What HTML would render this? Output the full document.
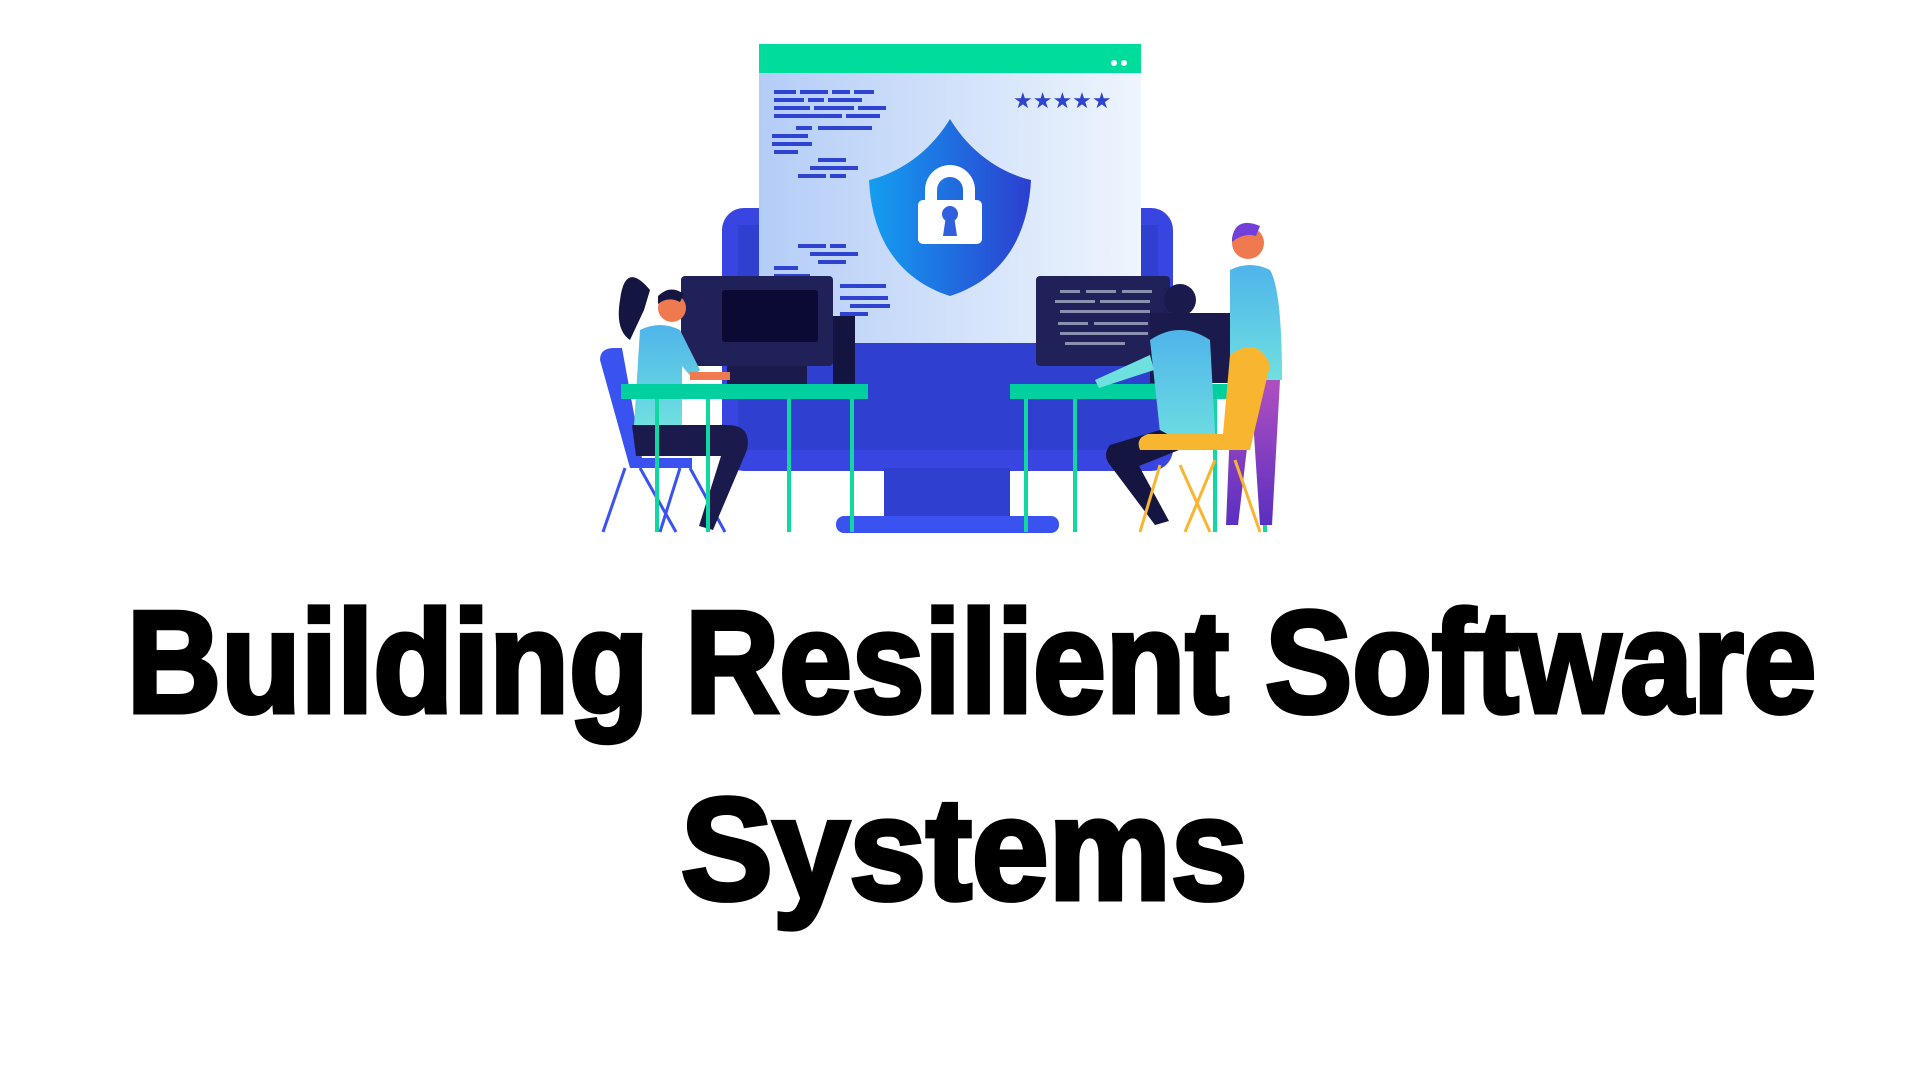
<!DOCTYPE html>
<html><head><meta charset="utf-8"><style>
html,body{margin:0;padding:0;background:#fff;width:1920px;height:1080px;overflow:hidden;position:relative}
.t{position:absolute;left:0;width:1920px;text-align:center;font-family:"Liberation Sans",sans-serif;font-weight:bold;font-size:145px;line-height:1;color:#000;-webkit-text-stroke:5px #000;white-space:nowrap}
.t span{display:inline-block;transform:scaleX(0.9);transform-origin:center}
svg{position:absolute;left:0;top:0}
</style></head><body>
<svg width="1920" height="1080" viewBox="0 0 1920 1080">
<defs>
<linearGradient id="pan" x1="0" x2="1" y1="0" y2="0"><stop offset="0" stop-color="#b4cdf7"/><stop offset="1" stop-color="#eef5fd"/></linearGradient>
<linearGradient id="sh" x1="0" x2="1"><stop offset="0" stop-color="#139ef0"/><stop offset="1" stop-color="#2c3fd0"/></linearGradient>
<linearGradient id="shirt" x1="0" x2="0" y1="0" y2="1"><stop offset="0" stop-color="#4fb4ea"/><stop offset="1" stop-color="#6fe0e0"/></linearGradient>
<linearGradient id="pants" x1="0" x2="0" y1="0" y2="1"><stop offset="0" stop-color="#b04fc0"/><stop offset="1" stop-color="#5a2fc0"/></linearGradient>
</defs>
<rect x="722" y="208" width="451" height="263" rx="22" fill="#3845e0"/>
<rect x="738" y="225" width="420" height="225" fill="#2f3fd0"/>
<rect x="884" y="468" width="126" height="52" fill="#2f3fd0"/>
<rect x="836" y="516" width="223" height="17" rx="8" fill="#3a52f0"/>
<rect x="759" y="73" width="382" height="270" fill="url(#pan)"/>
<rect x="759" y="44" width="382" height="29" fill="#00dc9c"/>
<circle cx="1114" cy="63" r="3" fill="#fff"/><circle cx="1124" cy="63" r="3" fill="#fff"/>
<g fill="#2e43d0">
<rect x="774" y="90" width="22" height="4"/><rect x="800" y="90" width="28" height="4"/><rect x="832" y="90" width="18" height="4"/><rect x="854" y="90" width="20" height="4"/>
<rect x="774" y="98" width="30" height="4"/><rect x="808" y="98" width="16" height="4"/><rect x="828" y="98" width="34" height="4"/>
<rect x="774" y="106" width="36" height="4"/><rect x="814" y="106" width="40" height="4"/><rect x="858" y="106" width="28" height="4"/>
<rect x="774" y="114" width="68" height="4"/><rect x="846" y="114" width="34" height="4"/>
<rect x="796" y="126" width="16" height="4"/><rect x="818" y="126" width="54" height="4"/>
<rect x="772" y="134" width="36" height="4"/><rect x="772" y="142" width="40" height="4"/><rect x="774" y="150" width="24" height="4"/>
<rect x="818" y="158" width="28" height="4"/><rect x="810" y="166" width="48" height="4"/><rect x="798" y="174" width="28" height="4"/><rect x="830" y="174" width="16" height="4"/>
<rect x="798" y="244" width="28" height="4"/><rect x="830" y="244" width="16" height="4"/><rect x="810" y="252" width="48" height="4"/><rect x="818" y="260" width="28" height="4"/>
<rect x="774" y="266" width="24" height="4"/><rect x="774" y="274" width="36" height="4"/>
<rect x="840" y="284" width="46" height="4"/><rect x="840" y="296" width="48" height="4"/><rect x="850" y="304" width="40" height="4"/><rect x="840" y="312" width="28" height="4"/>
</g>
<g fill="#2e43d0" font-family="DejaVu Sans" font-size="22"><text x="1013" y="108">★★★★★</text></g>
<path d="M950 119 C975 160 1010 175 1031 180 C1028 240 1000 280 950 296 C900 280 872 240 869 180 C890 175 925 160 950 119Z" fill="url(#sh)"/>
<path d="M925 200 v-10 a25 25 0 0 1 50 0 v10 h-12 v-10 a13 13 0 0 0 -26 0 v10z" fill="#fff"/>
<rect x="918" y="200" width="64" height="44" rx="5" fill="#fff"/>
<circle cx="950" cy="214" r="8" fill="#2e60e0"/><path d="M946 216 h8 l3 20 h-14z" fill="#2e60e0"/>
<rect x="681" y="276" width="152" height="90" rx="4" fill="#1f2158"/>
<rect x="722" y="290" width="96" height="52" rx="3" fill="#0a0a35"/>
<rect x="833" y="316" width="22" height="68" fill="#13143f"/>
<rect x="727" y="366" width="80" height="18" fill="#1a1b4c"/>
<rect x="1036" y="276" width="134" height="90" rx="4" fill="#1f2158"/>
<g fill="#8a90b0"><rect x="1060" y="290" width="20" height="3"/><rect x="1086" y="290" width="30" height="3"/><rect x="1122" y="290" width="30" height="3"/><rect x="1055" y="300" width="40" height="3"/><rect x="1100" y="300" width="50" height="3"/><rect x="1060" y="310" width="90" height="3"/><rect x="1058" y="322" width="30" height="3"/><rect x="1094" y="322" width="54" height="3"/><rect x="1060" y="332" width="88" height="3"/><rect x="1065" y="342" width="60" height="3"/></g>
<rect x="1150" y="313" width="110" height="70" fill="#1a1b4c"/>
<path d="M600 360 q0 -12 14 -12 l8 0 l20 110 l50 0 l0 10 l-62 0z" fill="#3a52f0"/>
<g stroke="#3a52f0" stroke-width="3"><line x1="625" y1="468" x2="603" y2="532"/><line x1="640" y1="468" x2="676" y2="532"/><line x1="680" y1="468" x2="660" y2="532"/><line x1="690" y1="468" x2="725" y2="532"/></g>
<path d="M650 290 q-25 -30 -30 10 q-5 30 10 40 l14 -30z" fill="#141540"/>
<circle cx="672" cy="308" r="14" fill="#f07a50"/>
<path d="M658 296 q12 -12 26 -2 l-4 8 q-12 -6 -22 2z" fill="#141540"/>
<path d="M640 330 q20 -10 40 0 l20 40 l-8 8 l-10 -12 v60 h-48 z" fill="url(#shirt)"/>
<path d="M632 425 h95 q25 0 20 25 l-34 80 l-14 -4 l22 -70 h-85 z" fill="#1a1b4c"/>
<rect x="690" y="372" width="40" height="8" fill="#f07a50"/>
<rect x="621" y="384" width="247" height="15" fill="#00d0a0"/>
<g stroke="#10d8a0" stroke-width="4"><line x1="657" y1="399" x2="657" y2="532"/><line x1="708" y1="399" x2="708" y2="532"/><line x1="789" y1="399" x2="789" y2="532"/><line x1="852" y1="399" x2="852" y2="532"/>
<line x1="1026" y1="399" x2="1026" y2="532"/><line x1="1075" y1="399" x2="1075" y2="532"/><line x1="1215" y1="399" x2="1215" y2="532"/><line x1="1265" y1="399" x2="1265" y2="532"/></g>
<rect x="1010" y="384" width="263" height="15" fill="#00d0a0"/>
<circle cx="1248" cy="243" r="16" fill="#f07a50"/>
<path d="M1232 238 q4 -22 28 -12 l-4 10 q-12 -4 -24 6z" fill="#7040d8"/>
<path d="M1230 270 q20 -10 40 0 q12 20 12 110 h-52 z" fill="url(#shirt)"/>
<path d="M1232 380 h48 l-8 145 h-12 l-8 -120 l-14 120 h-12z" fill="url(#pants)"/>
<circle cx="1180" cy="300" r="16" fill="#1a1b4c"/>
<path d="M1150 340 q30 -20 60 0 l6 110 h-54 z" fill="url(#shirt)"/>
<path d="M1150 355 l-55 25 l4 8 l55 -18z" fill="#6fe0e0"/>
<path d="M1160 430 l-50 15 q-8 10 0 20 l45 60 l14 -4 l-30 -55 l50 -20z" fill="#141540"/>
<path d="M1230 355 q28 -20 40 10 l-20 85 h-110 q-5 -12 8 -16 h75z" fill="#f8b530"/>
<g stroke="#f8b530" stroke-width="3"><line x1="1160" y1="465" x2="1140" y2="532"/><line x1="1180" y1="465" x2="1210" y2="532"/><line x1="1215" y1="460" x2="1185" y2="532"/><line x1="1235" y1="460" x2="1260" y2="532"/></g>
</svg>
<div class="t" style="top:590px;left:12px"><span>Building Resilient Software</span></div>
<div class="t" style="top:777px;left:4px"><span style="transform:scaleX(0.95)">Systems</span></div>
</body></html>
